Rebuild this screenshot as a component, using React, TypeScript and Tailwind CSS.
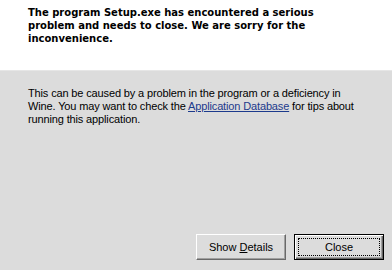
export default function App() {
  return (
    <div
      className="w-[392px] h-[270px] flex flex-col bg-[#dcdcdc] text-black overflow-hidden"
      style={{ fontFamily: '"Liberation Sans", Arial, sans-serif' }}
    >
      {/* Header */}
      <div className="h-[71px] bg-white border-b border-[#e6e6e6] pl-[28px] pt-[6px]">
        <p
          className="text-[10px] leading-[13px] font-bold whitespace-nowrap"
          style={{ fontFamily: '"DejaVu Sans", Verdana, sans-serif' }}
        >
          The program Setup.exe has encountered a serious
          <br />
          problem and needs to close. We are sorry for the
          <br />
          inconvenience.
        </p>
      </div>

      {/* Body */}
      <div className="pl-[28px] pt-[16px]">
        <p className="text-[11px] leading-[13px] tracking-[-0.14px] whitespace-nowrap">
          This can be caused by a problem in the program or a deficiency in
          <br />
          Wine. You may want to check the{" "}
          <a href="#" className="text-[#1c3a8c] underline">
            Application Database
          </a>{" "}
          for tips about
          <br />
          running this application.
        </p>
      </div>

      <div className="flex-1" />

      {/* Buttons */}
      <div className="flex justify-end gap-[8px] pr-[8px] pb-[10px]">
        <button className="w-[90px] h-[26px] bg-[#dcdcdc] border-t border-l border-white border-b border-r border-b-[#696969] border-r-[#696969] shadow-[inset_-1px_-1px_#a0a0a0] text-[11px] flex items-center justify-center">
          <span>
            Show <span className="underline">D</span>etails
          </span>
        </button>
        <button className="w-[90px] h-[26px] bg-[#dcdcdc] border border-black shadow-[inset_1px_1px_#ffffff,inset_-1px_-1px_#696969,inset_-2px_-2px_#a0a0a0] text-[11px] flex p-[3px]">
          <div className="flex-1 border border-dotted border-black flex items-center justify-center">
            Close
          </div>
        </button>
      </div>
    </div>
  );
}
